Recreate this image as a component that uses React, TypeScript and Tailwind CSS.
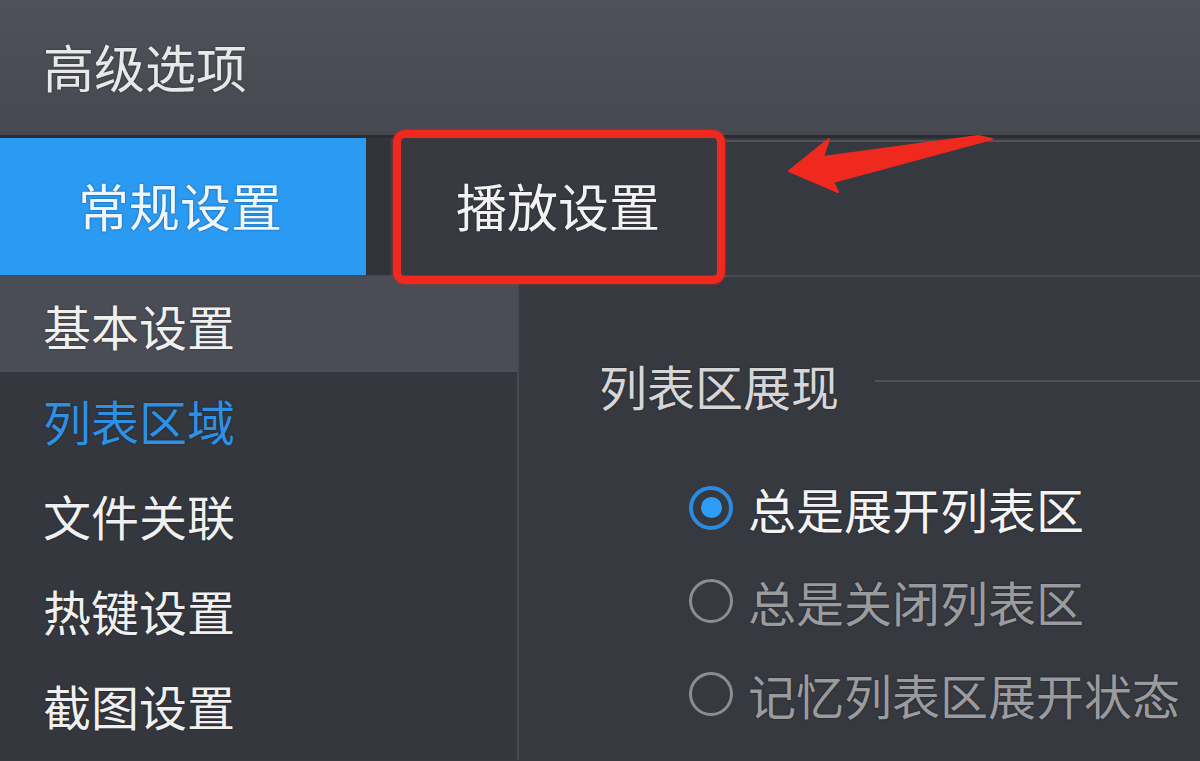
// App.tsx - 高级选项 / 列表区域 settings panel
const sideItems = [
  { label: '基本设置', active: false, hover: true },
  { label: '列表区域', active: true, hover: false },
  { label: '文件关联', active: false, hover: false },
  { label: '热键设置', active: false, hover: false },
  { label: '截图设置', active: false, hover: false },
];

const options = [
  { label: '总是展开列表区', checked: true },
  { label: '总是关闭列表区', checked: false },
  { label: '记忆列表区展开状态', checked: false },
];

function Radio({ checked }: { checked: boolean }) {
  if (checked) {
    return (
      <span className="w-[44px] h-[44px] rounded-full border-[4px] border-[#2a8be0] flex items-center justify-center shrink-0">
        <span className="w-[21px] h-[21px] rounded-full bg-[#2f9df7]" />
      </span>
    );
  }
  return <span className="w-[44px] h-[44px] rounded-full border-[3px] border-[#8c8d90] shrink-0" />;
}

export default function App() {
  return (
    <div className="relative w-[1200px] h-[761px] overflow-hidden bg-[#373940] font-['Noto_Sans_CJK_SC','Noto_Sans',sans-serif] [text-shadow:0_0_2px_rgba(0,0,0,0.55)]">
      {/* Title bar */}
      <header className="h-[138px] flex items-center pl-[43px] pb-[3px] bg-gradient-to-b from-[#4e5159] to-[#464950] border-b-[3px] border-[#2a2c31]">
        <h1 className="text-[51px] leading-none text-[#e8e8e8]">高级选项</h1>
      </header>

      {/* Tabs */}
      <div className="flex h-[139px] border-b-2 border-[#474a51]">
        <div className="w-[366px] bg-[#2b9af3] flex items-center justify-center pb-[2px]">
          <span className="text-[51px] leading-none text-[#eef6ff] pr-[6px]">常规设置</span>
        </div>
        <div className="w-[24px] bg-[#313338]" />
        <div className="relative w-[336px] bg-[#383a41] flex items-center justify-center pb-[2px]">
          <span className="text-[51px] leading-none text-[#f2f2f2]">播放设置</span>
          {/* annotation box */}
          <div className="absolute -top-[8px] -bottom-[9px] left-[3px] right-[1px] border-[8px] border-[#ef291d] rounded-[12px] shadow-[0_0_3px_rgba(239,41,29,0.7)] pointer-events-none" />
        </div>
        <div className="flex-1 bg-[#373940] border-t-2 border-[#50535b] mt-[2px]" />
      </div>

      {/* Body */}
      <div className="flex h-[483px]">
        <nav className="w-[519px] bg-[#35373e] border-r-2 border-[#46494f] flex flex-col">
          {sideItems.map((item) => (
            <div
              key={item.label}
              className={`h-[95px] flex items-center pl-[43px] text-[48px] leading-none ${
                item.hover ? 'bg-[#4a4d55]' : ''
              } ${item.active ? 'text-[#2e90e4]' : 'text-[#f0f0f0]'}`}
            >
              {item.label}
            </div>
          ))}
        </nav>

        <main className="flex-1 pl-[80px] pt-[78px]">
          <div className="flex items-center">
            <span className="text-[48px] leading-[60px] text-[#d6d6d8]">列表区展现</span>
            <span className="flex-1 h-[2px] bg-[#50535a] ml-[36px] -mt-[8px]" />
          </div>

          <div className="mt-[46px] ml-[90px] flex flex-col">
            {options.map((o) => (
              <label key={o.label} className="h-[93px] flex items-center gap-[15px]">
                <Radio checked={o.checked} />
                <span className={`text-[48px] leading-none whitespace-nowrap ${o.checked ? 'text-[#f4f4f4]' : 'text-[#9a9b9e]'}`}>
                  {o.label}
                </span>
              </label>
            ))}
          </div>
        </main>
      </div>

      {/* annotation arrow */}
      <svg className="absolute left-0 top-0 w-[1200px] h-[761px] pointer-events-none" viewBox="0 0 1200 761">
        <polygon
          points="789,171 829,139 823,157 978,136 992,139 833,182 838,192"
          fill="#ef291d"
          stroke="#ef291d"
          strokeWidth="2"
          strokeLinejoin="round"
        />
      </svg>
    </div>
  );
}
